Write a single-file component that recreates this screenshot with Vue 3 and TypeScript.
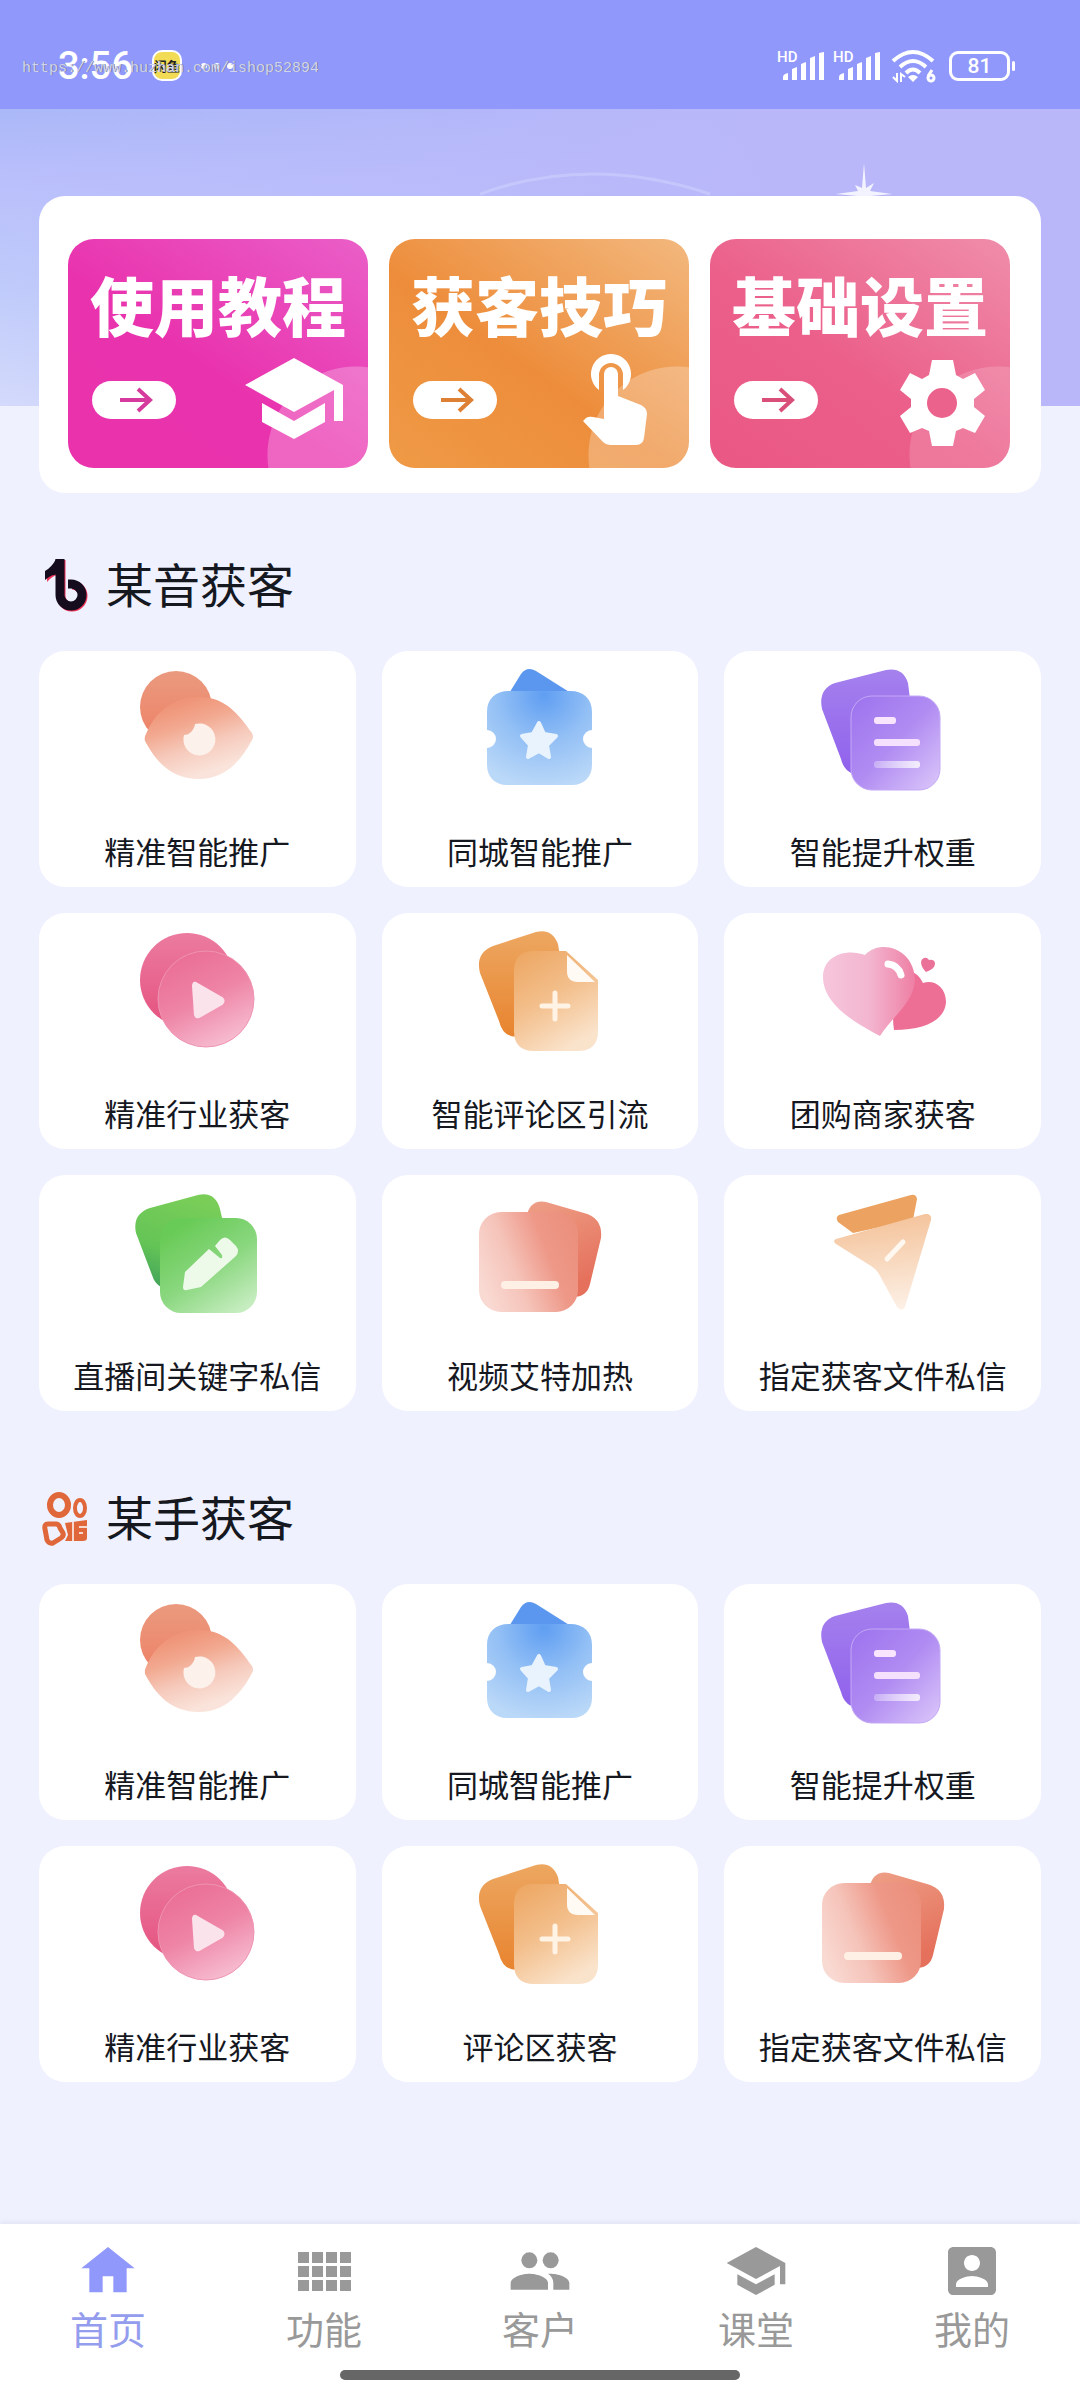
<script setup lang="ts">
interface Feature {
  icon: string
  label: string
}

interface Group {
  logo: string
  title: string
  items: Feature[]
}

interface Banner {
  tone: string
  icon: string
  title: string
}

const banners: Banner[] = [
  { tone: 'magenta', icon: 'cap', title: '使用教程' },
  { tone: 'orange', icon: 'tap', title: '获客技巧' },
  { tone: 'rose', icon: 'gear', title: '基础设置' },
]

const groups: Group[] = [
  {
    logo: 'note',
    title: '某音获客',
    items: [
      { icon: 'eye', label: '精准智能推广' },
      { icon: 'ticket', label: '同城智能推广' },
      { icon: 'doc', label: '智能提升权重' },
      { icon: 'play', label: '精准行业获客' },
      { icon: 'file', label: '智能评论区引流' },
      { icon: 'hearts', label: '团购商家获客' },
      { icon: 'pencil', label: '直播间关键字私信' },
      { icon: 'card', label: '视频艾特加热' },
      { icon: 'plane', label: '指定获客文件私信' },
    ],
  },
  {
    logo: 'camera',
    title: '某手获客',
    items: [
      { icon: 'eye', label: '精准智能推广' },
      { icon: 'ticket', label: '同城智能推广' },
      { icon: 'doc', label: '智能提升权重' },
      { icon: 'play', label: '精准行业获客' },
      { icon: 'file', label: '评论区获客' },
      { icon: 'card', label: '指定获客文件私信' },
    ],
  },
]

const tabs: Feature[] = [
  { icon: 'home', label: '首页' },
  { icon: 'grid', label: '功能' },
  { icon: 'people', label: '客户' },
  { icon: 'school', label: '课堂' },
  { icon: 'account', label: '我的' },
]
</script>

<template>
  <div class="app">
    <svg class="sprite" aria-hidden="true">
      <defs>
        <linearGradient id="g-eye-b" x1="0" y1="0" x2="0" y2="1">
          <stop offset="0" stop-color="#ea9a7f" /><stop offset="1" stop-color="#ee8065" />
        </linearGradient>
        <linearGradient id="g-eye-f" x1="0.25" y1="0.1" x2="0.6" y2="0.9">
          <stop offset="0" stop-color="#ef9478" /><stop offset="0.3" stop-color="#f2a88f" /><stop offset="0.65" stop-color="#f6cbbd" /><stop offset="1" stop-color="#fae3da" />
        </linearGradient>
        <radialGradient id="g-tic-f" gradientUnits="userSpaceOnUse" cx="68" cy="28" r="92">
          <stop offset="0" stop-color="#5f9ef2" /><stop offset="0.5" stop-color="#92bff5" /><stop offset="1" stop-color="#bad8f8" />
        </radialGradient>
        <linearGradient id="g-doc-f" x1="0" y1="0" x2="1" y2="1">
          <stop offset="0" stop-color="#9d72ee" /><stop offset="0.5" stop-color="#b08cf2" /><stop offset="1" stop-color="#dcc8fa" />
        </linearGradient>
        <linearGradient id="g-doc-b" x1="0" y1="0" x2="0" y2="1">
          <stop offset="0" stop-color="#a581ee" /><stop offset="1" stop-color="#9061ec" />
        </linearGradient>
        <linearGradient id="g-play-b" x1="0" y1="0" x2="0" y2="1">
          <stop offset="0" stop-color="#ec7ba0" /><stop offset="1" stop-color="#e4527f" />
        </linearGradient>
        <linearGradient id="g-play-f" x1="0.2" y1="0" x2="0.7" y2="1">
          <stop offset="0" stop-color="#ea6c94" /><stop offset="0.5" stop-color="#ee84a6" /><stop offset="1" stop-color="#f7bfd2" />
        </linearGradient>
        <linearGradient id="g-file-b" x1="0" y1="0" x2="0" y2="1">
          <stop offset="0" stop-color="#eda761" /><stop offset="1" stop-color="#e8842f" />
        </linearGradient>
        <linearGradient id="g-file-f" x1="0.1" y1="0" x2="0.6" y2="1">
          <stop offset="0" stop-color="#eda763" /><stop offset="0.5" stop-color="#f3bf8c" /><stop offset="1" stop-color="#fae3cb" />
        </linearGradient>
        <linearGradient id="g-heart" x1="0" y1="0.5" x2="1" y2="0.5">
          <stop offset="0" stop-color="#f6c6dc" /><stop offset="0.5" stop-color="#f3b6d0" /><stop offset="1" stop-color="#ee7fa4" />
        </linearGradient>
        <linearGradient id="g-pen-b" x1="0.6" y1="0" x2="0.3" y2="1">
          <stop offset="0" stop-color="#7ace58" /><stop offset="0.6" stop-color="#64c456" /><stop offset="1" stop-color="#42a35b" />
        </linearGradient>
        <linearGradient id="g-pen-f" x1="0.2" y1="0.1" x2="0.8" y2="1">
          <stop offset="0" stop-color="#69cb57" /><stop offset="0.5" stop-color="#8ad77f" /><stop offset="1" stop-color="#c6edc0" />
        </linearGradient>
        <linearGradient id="g-card-b" x1="0" y1="0" x2="0.4" y2="1">
          <stop offset="0" stop-color="#eea088" /><stop offset="1" stop-color="#e5705b" />
        </linearGradient>
        <linearGradient id="g-card-f" x1="0" y1="0.7" x2="1" y2="0.3">
          <stop offset="0" stop-color="#f9dad3" /><stop offset="0.35" stop-color="#f5c3b9" /><stop offset="0.7" stop-color="#ee9888" /><stop offset="1" stop-color="#ec907e" />
        </linearGradient>
        <linearGradient id="g-plane" x1="0.5" y1="0" x2="0.6" y2="1">
          <stop offset="0" stop-color="#f4c299" /><stop offset="0.5" stop-color="#f8d9bf" /><stop offset="1" stop-color="#fdf0e6" />
        </linearGradient>
        <linearGradient id="g-shine" x1="0" y1="0" x2="1" y2="0">
          <stop offset="0" stop-color="#fff" stop-opacity="0.3" /><stop offset="1" stop-color="#fff" stop-opacity="0.8" />
        </linearGradient>
      </defs>

      <symbol id="i-eye" viewBox="0 0 128 128">
        <circle cx="43" cy="40" r="36" fill="url(#g-eye-b)" />
        <path d="M13 67C23 43 42 30 66 30C93 30 106 48 119 66Q121 70 119 73C108 94 92 112 66 112C37 112 22 93 12 74Q11 70 13 67Z" fill="url(#g-eye-f)" />
        <path d="M62 57A16 16 0 1 1 51 68C57 68 61 63 62 57Z" fill="#fdf1ec" />
      </symbol>
      <symbol id="i-ticket" viewBox="0 0 128 128">
        <path d="M32 28L45 7Q51 -1 60 4L98 28V40H32Z" fill="#5c97ef" />
        <path d="M33 24H94C108 24 116 32 116 45V63A9 9 0 0 0 116 81V98C116 110 108 118 96 118H31C19 118 11 110 11 98V81A9 9 0 0 0 11 63V45C11 32 19 24 33 24Z" fill="url(#g-tic-f)" />
        <path d="M63 56L68 67L80 69L71 78L73 90L63 84L52 90L54 78L46 69L57 67Z" fill="#e9f3fe" stroke="#e9f3fe" stroke-width="4" stroke-linejoin="round" />
      </symbol>
      <symbol id="i-doc" viewBox="0 0 128 128">
        <path d="M16 16L67 3Q84 0 89 16L92 40L50 106Q27 112 22 92L3 42Q-1 22 16 16Z" fill="url(#g-doc-b)" />
        <rect x="32" y="29" width="89" height="94" rx="21" fill="url(#g-doc-f)" stroke="#c4a9f5" stroke-width="1" />
        <rect x="55" y="50" width="22" height="7" rx="3" fill="#f9e6fe" />
        <rect x="55" y="72" width="46" height="7" rx="3" fill="#f5e1fe" />
        <rect x="55" y="94" width="46" height="7" rx="3" fill="url(#g-shine)" />
      </symbol>
      <symbol id="i-play" viewBox="0 0 128 128">
        <circle cx="54" cy="51" r="47" fill="url(#g-play-b)" />
        <circle cx="73" cy="70" r="48" fill="url(#g-play-f)" stroke="#ef94b1" stroke-width="1" />
        <path d="M63 54L89 69Q92 72 89 75L66 88Q63 89 62 86L60 57Q60 53 63 54Z" fill="#fbe3ec" stroke="#fbe3ec" stroke-width="2" />
      </symbol>
      <symbol id="i-file" viewBox="0 0 128 128">
        <path d="M17 17L60 3Q76 -1 82 15L86 40L50 106Q28 113 23 92L4 44Q-1 24 17 17Z" fill="url(#g-file-b)" />
        <path d="M58 22H90L122 51V102Q122 122 102 122H58Q38 122 38 102V42Q38 22 58 22Z" fill="url(#g-file-f)" />
        <path d="M91 26L119 53H102Q91 53 91 42Z" fill="#fffaf4" />
        <path d="M79 64V90M66 77H92" stroke="#fff3e6" stroke-width="5" stroke-linecap="round" />
      </symbol>
      <symbol id="i-hearts" viewBox="0 0 128 128">
        <path d="M75 101C72 82 76 60 88 42C96 42 101 48 104 54C114 50 127 57 127 73C126 91 106 101 75 101Z" fill="#ed6f96" />
        <path d="M61 107C43 97 4 78 4 48C4 26 28 19 46 26C62 9 96 20 96 52C94 74 73 88 61 107Z" fill="url(#g-heart)" />
        <path d="M69 35Q79 36 82 46" fill="none" stroke="#fff" stroke-width="7" stroke-linecap="round" />
        <path d="M107 43C102 38 100 31 105 29Q108 28 110 31Q115 30 116 34C116 39 112 41 107 43Z" fill="#ea7197" />
      </symbol>
      <symbol id="i-pencil" viewBox="0 0 128 128">
        <path d="M17 17L65 4Q82 0 87 18L92 40L50 98Q25 103 19 84L3 42Q-1 23 17 17Z" fill="url(#g-pen-b)" />
        <rect x="27" y="27" width="97" height="95" rx="21" fill="url(#g-pen-f)" />
        <path d="M50 96L52 81L76 58L87 67Q90 68 89 64L82 55L87 49Q92 44 97 49L103 55Q107 60 103 65L68 96L54 99Q50 100 50 96Z" fill="#edfaea" />
      </symbol>
      <symbol id="i-card" viewBox="0 0 128 128">
        <path d="M70 11L108 22Q127 27 125 47L114 93Q111 106 97 106L50 60V28Q53 8 70 11Z" fill="url(#g-card-b)" />
        <rect x="3" y="21" width="99" height="100" rx="22" fill="url(#g-card-f)" />
        <rect x="25" y="90" width="58" height="8" rx="4" fill="#fff0e6" />
      </symbol>
      <symbol id="i-plane" viewBox="0 0 128 128">
        <path d="M20 24L92 4Q97 3 98 8L94 29L34 42L19 31Q16 26 20 24Z" fill="#eca260" />
        <path d="M17 48L106 23Q113 22 112 29L86 116Q83 121 78 116L60 83Q57 78 52 75L17 53Q13 50 17 48Z" fill="url(#g-plane)" />
        <path d="M68 68L84 51" stroke="#fff8f0" stroke-width="5" stroke-linecap="round" />
      </symbol>

      <symbol id="i-note" viewBox="0 0 52 56">
        <g fill="#ee3358" stroke="#ee3358">
          <path d="M22 3V39A11 11 0 1 0 33 28" fill="none" stroke-width="9" />
          <path d="M21 3V17Q14 18 8 25V16Z" stroke="none" />
        </g>
        <g fill="#150d1e" stroke="#150d1e">
          <path d="M21 2V38A11 11 0 1 0 32 27H29" fill="none" stroke-width="9" />
          <path d="M21 2V17Q12 17 6 23V14Q13 10 17 2Z" stroke="none" />
        </g>
      </symbol>
      <symbol id="i-camera" viewBox="0 0 52 56">
        <g fill="none" stroke="#e0673a">
          <ellipse cx="20" cy="15" rx="9" ry="10" stroke-width="6" />
          <ellipse cx="41" cy="18" rx="5" ry="8" stroke-width="4" />
          <path d="M9 34H17Q20 34 21 38L24 43Q25 46 22 48L14 53Q10 54 8 50L6 39Q5 34 9 34Z" stroke-width="5" />
        </g>
        <path d="M26 33L48 30V48Q48 51 44 51H26L29 45Z" fill="#e0673a" />
        <path d="M34 32V51M40 37H48M40 43H44" stroke="#f6d8ce" stroke-width="2" />
      </symbol>

      <symbol id="i-cap" viewBox="0 0 98 94">
        <path d="M49 4L98 31V67H89V36L49 58L0 31Z" />
        <path d="M17 49L49 67L80 49V68L49 85L17 68Z" />
      </symbol>
      <symbol id="i-tap" viewBox="0 0 98 94">
        <path d="M45 0A20 20 0 0 1 57 36V21A12 12 0 0 0 33 21V36A20 20 0 0 1 45 0Z" />
        <path d="M38 20A7 7 0 0 1 52 20V42L75 51Q81 54 81 60L78 84Q77 91 70 91H44Q40 91 37 88L17 67L20 64Q23 62 27 63L38 65Z" />
      </symbol>
      <symbol id="i-gear" viewBox="0 0 98 94">
        <circle cx="55" cy="49" r="16" fill="#eb638c" />
        <path fill-rule="evenodd" d="M45 6H66L69 21L76 25L88 19L98 36L87 45V53L98 62L88 79L76 74L69 77L66 92H45L42 77L35 74L23 79L13 62L24 53V45L13 36L23 19L35 25L42 21ZM55 34A15 15 0 1 0 55 64A15 15 0 1 0 55 34Z" />
      </symbol>

      <symbol id="i-home" viewBox="0 0 24 24"><path d="M10 20v-6h4v6h5v-9h3L12 3 2 11h3v9z" /></symbol>
      <symbol id="i-grid" viewBox="0 0 64 64">
        <path d="M6 13h11v11h-11zM20 13h11v11h-11zM34 13h11v11h-11zM48 13h11v11h-11zM6 27h11v11h-11zM20 27h11v11h-11zM34 27h11v11h-11zM48 27h11v11h-11zM6 41h11v11h-11zM20 41h11v11h-11zM34 41h11v11h-11zM48 41h11v11h-11z" />
      </symbol>
      <symbol id="i-people" viewBox="0 0 24 24">
        <circle cx="16" cy="8" r="3" /><circle cx="8" cy="8" r="3" />
        <path d="M8 13C5.670 13 1 14.170 1 16.500V19H15V16.500C15 14.170 10.330 13 8 13Z" />
        <path d="M16 13C15.710 13 15.380 13.020 15.030 13.050C16.190 13.890 17 15.020 17 16.500V19H23V16.500C23 14.170 18.330 13 16 13Z" />
      </symbol>
      <symbol id="i-school" viewBox="0 0 24 24"><path d="M5 13.180v4L12 21l7-3.820v-4L12 17l-7-3.820zM12 3L1 9l11 6 9-4.910V17h2V9L12 3z" /></symbol>
      <symbol id="i-account" viewBox="0 0 24 24">
        <path d="M3 5v14c0 1.100.89 2 2 2h14c1.100 0 2-.9 2-2V5c0-1.100-.9-2-2-2H5c-1.110 0-2 .9-2 2zm12 4c0 1.660-1.340 3-3 3s-3-1.340-3-3 1.340-3 3-3 3 1.340 3 3zm-9 8c0-2 4-3.100 6-3.100s6 1.100 6 3.100v1H6v-1z" />
      </symbol>
      <symbol id="i-signal" viewBox="0 0 48 32">
        <path d="M6 30v-3q0-3 5-4v7zM15 30V19l5-2v13zM24 30V14l5-2v18zM33 30V8l5-2v24zM42 30V3l5-1v28z" />
      </symbol>
    </svg>

    <header class="status">
      <div class="status-left">
        <time class="clock">3:56</time>
        <span class="badge">闲鱼</span>
        <span class="dots"><i></i><i></i><i></i></span>
      </div>
      <div class="status-right">
        <span v-for="n in 2" :key="n" class="signal">
          <span class="hd">HD</span>
          <svg class="bars" aria-hidden="true"><use href="#i-signal" /></svg>
        </span>
        <svg class="wifi" viewBox="0 0 46 34" aria-hidden="true">
          <g fill="none" stroke="#fff" stroke-width="4">
            <path d="M2 12Q22-6 42 12" /><path d="M9 18Q22 6 35 18" /><path d="M15 24Q22 17 29 24" />
          </g>
          <path d="M17 28Q22 24 27 28L22 33Z" fill="#fff" />
          <path d="M6 24V32L2 28M10 33V25L14 28" fill="none" stroke="#fff" stroke-width="2" />
          <path d="M41 21L37 27" stroke="#fff" stroke-width="3" /><circle cx="40" cy="29" r="3" fill="none" stroke="#fff" stroke-width="3" />
        </svg>
        <span class="battery">81</span>
      </div>
      <span class="watermark">https://www.huzhan.com/ishop52894</span>
    </header>

    <main class="content">
      <svg class="sparkle" viewBox="0 0 420 60" aria-hidden="true">
        <path d="M0 57Q110 17 230 57" fill="none" stroke="#d2d5fd" stroke-width="3" opacity="0.5" />
        <path d="M384 26L386 51L394 46L390 54L412 57L390 59H378L356 57L378 54L375 48L382 51Z" fill="#f3f3ff" />
      </svg>

      <nav class="banners" aria-label="快捷入口">
        <button v-for="b in banners" :key="b.title" type="button" class="banner" :class="b.tone">
          <span class="banner-title">{{ b.title }}</span>
          <span class="banner-foot">
            <span class="pill">
              <svg viewBox="0 0 36 26" aria-hidden="true"><path d="M2 13H32M20 2L32 13L20 24" /></svg>
            </span>
            <svg class="banner-icon" aria-hidden="true"><use :href="'#i-' + b.icon" /></svg>
          </span>
        </button>
      </nav>

      <section v-for="g in groups" :key="g.title" class="group">
        <h2 class="group-title">
          <svg class="logo" aria-hidden="true"><use :href="'#i-' + g.logo" /></svg>
          {{ g.title }}
        </h2>
        <div class="cards">
          <button v-for="item in g.items" :key="item.label" type="button" class="card">
            <svg class="card-icon" aria-hidden="true"><use :href="'#i-' + item.icon" /></svg>
            <span>{{ item.label }}</span>
          </button>
        </div>
      </section>
    </main>

    <footer class="bottom">
      <nav class="tabs" aria-label="主导航">
        <a v-for="(t, i) in tabs" :key="t.label" href="#" class="tab" :class="{ active: i === 0 }">
          <svg class="tab-icon" aria-hidden="true"><use :href="'#i-' + t.icon" /></svg>
          <span>{{ t.label }}</span>
        </a>
      </nav>
      <div class="home-bar"></div>
    </footer>
  </div>
</template>

<style>
body {
  margin: 0;
  background: #eff1fe;
}
</style>

<style scoped>
.app {
  display: flex;
  flex-direction: column;
  min-height: 100vh;
  background: #eff1fe;
  font-family: "Noto Sans CJK SC", "Noto Sans", sans-serif;
  color: #16181f;
}

.app button {
  border: 0;
  margin: 0;
  font-family: inherit;
  color: inherit;
  cursor: pointer;
}

.sprite {
  position: absolute;
  width: 0;
  height: 0;
}

/* Status bar */
.status {
  position: relative;
  box-sizing: border-box;
  height: 109px;
  padding: 22px 70px 0 58px;
  display: flex;
  align-items: center;
  justify-content: space-between;
  background: #9099fb;
  color: #fff;
}

.status-left,
.status-right {
  display: flex;
  align-items: center;
}

.status-left {
  gap: 19px;
}

.clock {
  font: 500 38px/40px Roboto, sans-serif;
}

.badge {
  box-sizing: border-box;
  width: 30px;
  height: 31px;
  border: 2px solid #fff;
  border-radius: 10px;
  background: #f3dc55;
  color: #222;
  font-size: 13px;
  font-weight: 700;
  line-height: 27px;
  display: flex;
  justify-content: center;
}

.dots {
  display: flex;
  gap: 7px;
}

.dots i {
  width: 6px;
  height: 6px;
  border-radius: 50%;
  background: #fff;
}

.status-right {
  gap: 8px;
}

.signal {
  position: relative;
  width: 48px;
  height: 32px;
}

.hd {
  position: absolute;
  left: 0;
  top: 0;
  font: 500 15px/14px Roboto, sans-serif;
}

.bars {
  display: block;
  width: 48px;
  height: 32px;
  fill: #fff;
}

.wifi {
  width: 46px;
  height: 34px;
  margin-left: 2px;
}

.battery {
  position: relative;
  box-sizing: border-box;
  width: 61px;
  height: 30px;
  margin-left: 4px;
  border: 3px solid #fff;
  border-radius: 9px;
  font: 500 21px/24px Roboto, sans-serif;
  text-align: center;
}

.battery::after {
  content: "";
  position: absolute;
  right: -8px;
  top: 7px;
  width: 3px;
  height: 10px;
  border-radius: 2px;
  background: #fff;
}

.watermark {
  position: absolute;
  left: 22px;
  top: 59px;
  font: 15px/20px "Liberation Mono", monospace;
  color: #d0d4ee;
  text-shadow: 1px 0 0 #7a7f9e;
}

/* Page body */
.content {
  position: relative;
  flex: 1;
  padding: 87px 39px 142px;
  background:
    linear-gradient(90deg, rgba(184, 182, 249, 0) 0%, #b9b7fa 72%) 0 0 / 100% 297px no-repeat,
    linear-gradient(180deg, #aab8f8 0%, #b9bffb 22%, #bfcbfa 60%, #d3dafb 100%) 0 0 / 100% 297px no-repeat;
}

.sparkle {
  position: absolute;
  left: 480px;
  top: 28px;
  width: 420px;
  height: 60px;
}

.banners {
  position: relative;
  display: grid;
  grid-template-columns: repeat(3, 1fr);
  gap: 21px;
  padding: 43px 31px 25px 29px;
  border-radius: 26px;
  background: #fff;
}

.banner {
  display: flex;
  flex-direction: column;
  align-items: center;
  height: 229px;
  padding: 28px 0 0;
  border-radius: 26px;
}

.app .banner {
  color: #fff;
}

.magenta {
  --ink: #d63a9c;
  background:
    radial-gradient(circle at calc(100% - 12px) calc(100% - 13px), rgba(255, 255, 255, 0.25) 88px, transparent 89px),
    linear-gradient(35deg, #e932ab 0%, #e933ae 45%, #ea5fc8 100%);
}

.orange {
  --ink: #de8034;
  background:
    radial-gradient(circle at calc(100% - 12px) calc(100% - 13px), rgba(255, 255, 255, 0.25) 88px, transparent 89px),
    linear-gradient(35deg, #ef9a46 0%, #ed8d3b 45%, #f3b87e 100%);
}

.rose {
  --ink: #da4f7a;
  background:
    radial-gradient(circle at calc(100% - 12px) calc(100% - 13px), rgba(255, 255, 255, 0.16) 88px, transparent 89px),
    linear-gradient(35deg, #ea5884 0%, #eb5f8a 45%, #f08dab 100%);
}

.banner-title {
  font-size: 64px;
  font-weight: 900;
  line-height: 72px;
  white-space: nowrap;
}

.banner-foot {
  align-self: stretch;
  display: flex;
  align-items: center;
  justify-content: space-between;
  margin-top: 15px;
  padding: 0 25px 0 24px;
}

.pill {
  display: flex;
  align-items: center;
  justify-content: center;
  width: 84px;
  height: 38px;
  margin-bottom: 2px;
  border-radius: 19px;
  background: #fff;
}

.pill svg {
  width: 36px;
  height: 26px;
  margin-left: 4px;
  fill: none;
  stroke: var(--ink);
  stroke-width: 4px;
}

.banner-icon {
  width: 98px;
  height: 94px;
  fill: #fff;
}

/* Feature groups */
.group {
  margin-top: 64px;
}

.group + .group {
  margin-top: 79px;
}

.group-title {
  display: flex;
  align-items: flex-start;
  gap: 15px;
  margin: 0 0 38px;
  font-size: 47px;
  font-weight: 400;
  line-height: 52px;
}

.logo {
  width: 52px;
  height: 56px;
}

.cards {
  display: grid;
  grid-template-columns: repeat(3, 1fr);
  gap: 26px;
}

.card {
  display: flex;
  flex-direction: column;
  align-items: center;
  justify-content: space-between;
  height: 236px;
  padding: 16px 0;
  border-radius: 26px;
  background: #fff;
  font-size: 31px;
  line-height: 40px;
  white-space: nowrap;
}

.card-icon {
  width: 128px;
  height: 128px;
}

/* Bottom navigation */
.bottom {
  display: flex;
  flex-direction: column;
  align-items: center;
  background: #fff;
  box-shadow: 0 -2px 4px rgba(120, 120, 160, 0.1);
}

.tabs {
  display: flex;
  align-self: stretch;
  padding-top: 15px;
}

.tab {
  flex: 1;
  display: flex;
  flex-direction: column;
  align-items: center;
  font-size: 38px;
  font-weight: 400;
  line-height: 50px;
  color: #999;
  fill: #999;
  text-decoration: none;
}

.tab.active {
  color: #949cee;
  fill: #9099fb;
}

.tab-icon {
  width: 64px;
  height: 64px;
}

.home-bar {
  width: 37%;
  height: 10px;
  margin: 17px 0 20px;
  border-radius: 5px;
  background: #666;
}
</style>
